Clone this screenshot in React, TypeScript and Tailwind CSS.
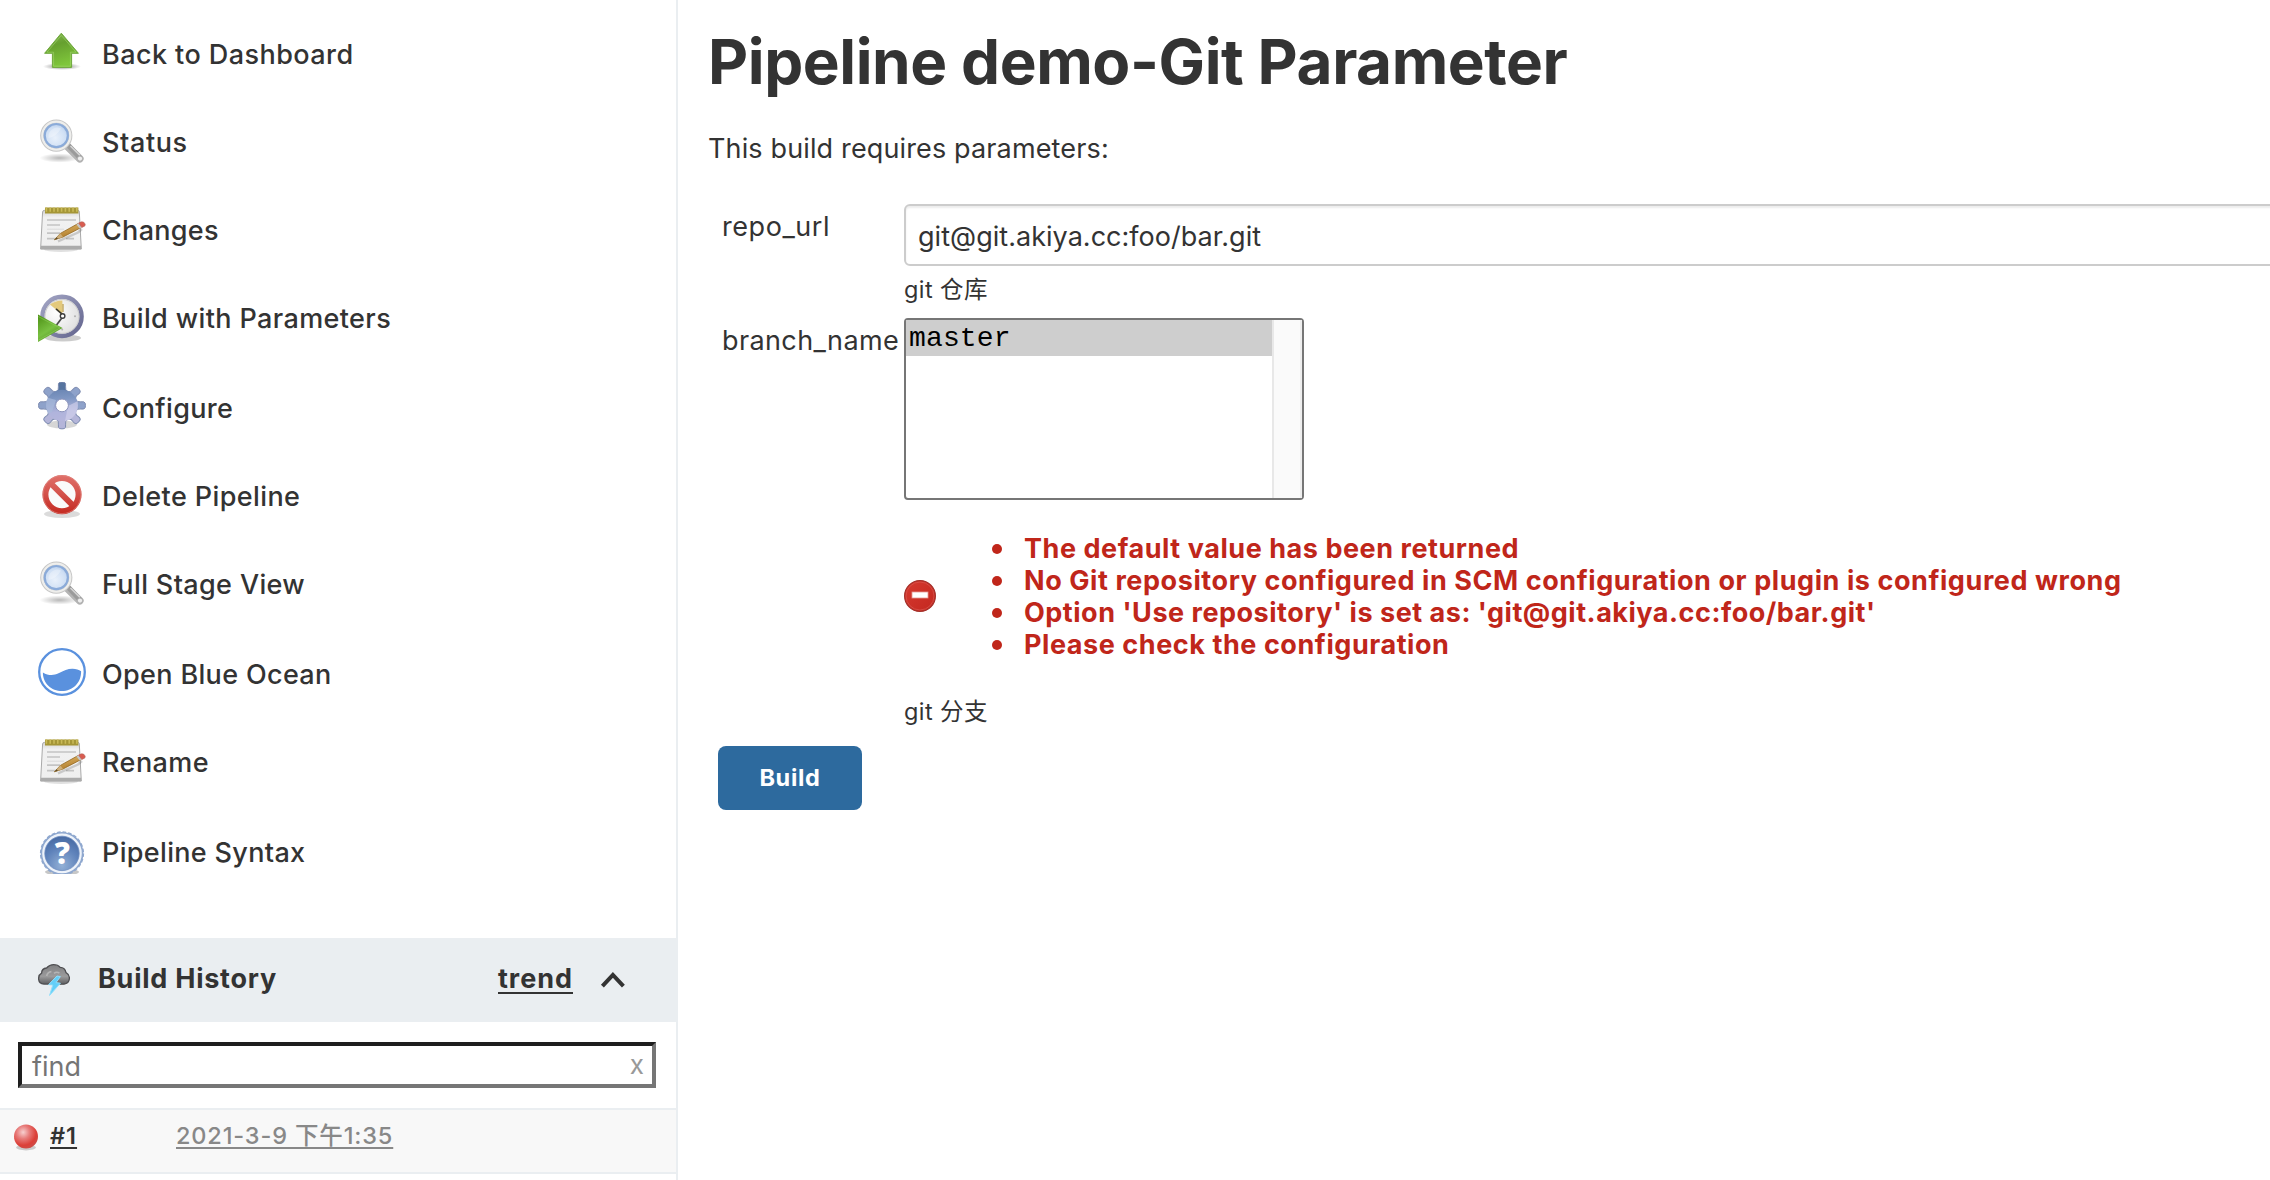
import React from "react";

const Svg48 = ({ children }: { children: React.ReactNode }) => (
  <svg width="48" height="48" viewBox="0 0 48 48" className="block shrink-0">
    {children}
  </svg>
);

function UpArrowIcon() {
  return (
    <Svg48>
      <defs>
        <linearGradient id="up-fill" x1="0" y1="0" x2="0.3" y2="1">
          <stop offset="0" stopColor="#86b956" />
          <stop offset="0.4" stopColor="#66a02f" />
          <stop offset="1" stopColor="#7fc63b" />
        </linearGradient>
        <radialGradient id="up-shadow">
          <stop offset="0" stopColor="#000" stopOpacity="0.5" />
          <stop offset="1" stopColor="#000" stopOpacity="0" />
        </radialGradient>
      </defs>
      <ellipse cx="24" cy="38.5" rx="19" ry="3.5" fill="url(#up-shadow)" />
      <path d="M23.3 5.2 L40.4 25.3 H33.6 V39.4 H14.4 V25.3 H6.6 Z" fill="url(#up-fill)" stroke="#6fa83d" strokeWidth="1" strokeLinejoin="round" />
      <path d="M23.3 7.4 L38 24.2 H32.4 V38.2 H15.6 V24.2 H9 Z" fill="none" stroke="#a5d873" strokeOpacity="0.55" strokeWidth="1" />
    </Svg48>
  );
}

function MagnifierIcon() {
  return (
    <Svg48>
      <defs>
        <radialGradient id="mag-glass" cx="0.45" cy="0.6" r="0.65">
          <stop offset="0" stopColor="#e9f1fb" />
          <stop offset="0.7" stopColor="#cfdff4" />
          <stop offset="1" stopColor="#b3cbea" />
        </radialGradient>
        <radialGradient id="mag-shadow">
          <stop offset="0" stopColor="#000" stopOpacity="0.28" />
          <stop offset="1" stopColor="#000" stopOpacity="0" />
        </radialGradient>
      </defs>
      <ellipse cx="21.5" cy="40" rx="20" ry="4.6" fill="url(#mag-shadow)" />
      <path d="M29 28 L41.8 40.8" stroke="#b4b4b4" strokeWidth="7.6" strokeLinecap="round" />
      <path d="M30 27 L41.5 39.4" stroke="#9b9b9b" strokeWidth="5" strokeLinecap="round" />
      <path d="M32.5 28 L42 37.4" stroke="#d4d4d4" strokeWidth="1.6" />
      <circle cx="42" cy="40.6" r="2.6" fill="#eeeeee" stroke="#a7a7a7" strokeWidth="0.9" />
      <circle cx="18.3" cy="17.6" r="14.2" fill="none" stroke="#c6c6c6" strokeWidth="3.8" />
      <circle cx="18.3" cy="17.6" r="14" fill="none" stroke="#eeeeec" strokeWidth="2.2" />
      <circle cx="18.3" cy="17.6" r="11.6" fill="url(#mag-glass)" stroke="#8babd9" strokeWidth="2.2" />
      <path d="M10.6 20 A 9 9 0 0 1 23 10.4 Q 19 18 10.6 20" fill="#fff" fillOpacity="0.3" />
    </Svg48>
  );
}

function NotepadIcon() {
  return (
    <Svg48>
      <defs>
        <linearGradient id="pad-fill" x1="0" y1="0" x2="0" y2="1">
          <stop offset="0" stopColor="#d2d2d2" />
          <stop offset="0.18" stopColor="#f1f1f1" />
          <stop offset="1" stopColor="#efefef" />
        </linearGradient>
        <linearGradient id="pad-pencil" x1="0" y1="0" x2="0.4" y2="1">
          <stop offset="0" stopColor="#e8bf70" />
          <stop offset="1" stopColor="#a97524" />
        </linearGradient>
      </defs>
      <ellipse cx="23" cy="43.6" rx="17" ry="2.4" fill="#000" fillOpacity="0.12" />
      <path d="M6.2 4.4 H40.2 Q41.2 4.4 41.3 6 L43.3 43 H2.6 L4.6 6 Q4.8 4.4 6.2 4.4Z" fill="url(#pad-fill)" stroke="#a9a9a9" strokeWidth="1" />
      <path d="M3 39.8 H43.2 V43.2 H2.6Z" fill="#ababab" />
      <path d="M7 4.6 H40.4" stroke="#a59637" strokeWidth="6" />
      <path d="M7.6 3.6 H40" stroke="#c9ba58" strokeWidth="4.2" strokeDasharray="1.6 2.2" />
      <path d="M9 14 H38 M9 19 H22 M9 27.2 H22 M9 32.6 H19 M28 32.6 H36" stroke="#c4c4c4" strokeWidth="1.7" />
      <path d="M9 23.2 H26" stroke="#dadada" strokeWidth="1" />
      <path d="M20 35.4 L40 26.5 L44 23" stroke="#000" strokeOpacity="0.16" strokeWidth="2.4" fill="none" />
      <path d="M16.4 33.8 L22.4 27.4 L40 17.6 L43 21.6 L25 31 Z" fill="url(#pad-pencil)" stroke="#93671f" strokeWidth="0.8" strokeLinejoin="round" />
      <path d="M16.4 33.8 L22.4 27.4 L25 31 Z" fill="#cdae7b" />
      <path d="M16.4 33.8 L18.6 31.2 L20 32.8 Z" fill="#5d4a25" />
      <path d="M38.4 18.4 L40.6 17 L43.8 21.4 L41.6 22.5Z" fill="#c5c5c5" />
      <path d="M40.6 17 Q44 15 46 16.4 Q48 18.2 46.8 20 L43.8 21.4Z" fill="#d95c50" stroke="#b7665b" strokeWidth="0.7" />
    </Svg48>
  );
}

function ClockPlayIcon() {
  return (
    <Svg48>
      <defs>
        <linearGradient id="clk-ring" x1="0" y1="0" x2="1" y2="1">
          <stop offset="0" stopColor="#a3a5c4" />
          <stop offset="1" stopColor="#63658e" />
        </linearGradient>
        <radialGradient id="clk-face" cx="0.35" cy="0.4" r="0.75">
          <stop offset="0" stopColor="#ffffff" />
          <stop offset="1" stopColor="#d9d9d9" />
        </radialGradient>
        <linearGradient id="clk-play" x1="0" y1="0" x2="0.6" y2="1">
          <stop offset="0" stopColor="#4c8f14" />
          <stop offset="0.6" stopColor="#79c142" />
          <stop offset="1" stopColor="#4f8c1f" />
        </linearGradient>
      </defs>
      <ellipse cx="25" cy="44" rx="18" ry="3.4" fill="#000" fillOpacity="0.2" />
      <circle cx="24" cy="22.4" r="19.6" fill="url(#clk-face)" stroke="url(#clk-ring)" strokeWidth="4.4" />
      <circle cx="24" cy="22.4" r="17" fill="none" stroke="#c9c9c9" strokeWidth="0.9" />
      <path d="M24.4 21 L12 10.6 Q16.4 6.6 24.4 6.4Z" fill="#e3c97c" />
      <path d="M24.4 20.4 L18 14.8" stroke="#3a382f" strokeWidth="1.6" />
      <path d="M25 10 V18" stroke="#b99a45" strokeWidth="1.2" />
      <path d="M25 22.6 L17 33" stroke="#4a4a4a" strokeWidth="1.7" />
      <circle cx="24.6" cy="22" r="2.3" fill="#fff" stroke="#3e3e3e" strokeWidth="1.4" />
      <circle cx="37" cy="22.2" r="1" fill="#b0b0b0" />
      <circle cx="24.2" cy="35.6" r="1" fill="#b0b0b0" />
      <path d="M0 20.6 L24.6 34 L0 48Z" fill="url(#clk-play)" />
      <path d="M0 22.4 L22 34 L0 46.4" fill="none" stroke="#9ad668" strokeOpacity="0.45" strokeWidth="1" />
    </Svg48>
  );
}

const TEETH = [0, 45, 90, 135, 180, 225, 270, 315];

function GearIcon() {
  return (
    <Svg48>
      <defs>
        <linearGradient id="gear-fill" gradientUnits="userSpaceOnUse" x1="22" y1="0" x2="26" y2="48">
          <stop offset="0" stopColor="#5b79a8" />
          <stop offset="0.35" stopColor="#7f97c3" />
          <stop offset="0.62" stopColor="#b0b4dc" />
          <stop offset="1" stopColor="#b9b7dc" />
        </linearGradient>
        <clipPath id="gear-body">
          <circle cx="24" cy="23.4" r="16" />
        </clipPath>
      </defs>
      <ellipse cx="24" cy="42.5" rx="15" ry="4" fill="#000" fillOpacity="0.16" />
      {TEETH.map((a) => (
        <path key={a} transform={`rotate(${a} 24 23.4)`} d="M18 9.8 Q21.2 7.8 20.4 4.6 Q19.8 0.6 21.8 0.2 Q24 -0.3 26.2 0.2 Q28.2 0.6 27.6 4.6 Q26.8 7.8 30 9.8Z" fill={a === 0 ? "#56749f" : a > 90 && a < 270 ? "#b4b5d9" : "#8ea2ca"} stroke="#7d8bb0" strokeWidth="1" />
      ))}
      <circle cx="24" cy="23.4" r="15.6" fill="url(#gear-fill)" />
      <g clipPath="url(#gear-body)">
        <path d="M4 14 L18 18 L14 30 L4 34Z" fill="#a9bbdc" fillOpacity="0.7" />
        <path d="M30 24 L42 18 L40 34 L26 44Z" fill="#d6d3ec" fillOpacity="0.6" />
      </g>
      <circle cx="24" cy="23.4" r="6.4" fill="#fff" stroke="#8c93bb" strokeWidth="1" />
    </Svg48>
  );
}

function DeleteIcon() {
  return (
    <Svg48>
      <defs>
        <linearGradient id="del-fill" gradientUnits="userSpaceOnUse" x1="0" y1="2" x2="0" y2="43">
          <stop offset="0" stopColor="#e0726c" />
          <stop offset="0.45" stopColor="#d5544d" />
          <stop offset="1" stopColor="#c3271e" />
        </linearGradient>
      </defs>
      <ellipse cx="24" cy="42" rx="18" ry="4" fill="#000" fillOpacity="0.14" />
      <circle cx="24" cy="22.6" r="16.6" fill="#fafafa" stroke="url(#del-fill)" strokeWidth="6" />
      <path d="M12.4 11 L35.6 34.2" stroke="url(#del-fill)" strokeWidth="6" />
      <circle cx="24" cy="22.6" r="19" fill="none" stroke="#e08a84" strokeOpacity="0.7" strokeWidth="0.9" />
    </Svg48>
  );
}

function OceanIcon() {
  return (
    <Svg48>
      <circle cx="24" cy="24" r="22.8" fill="#fff" stroke="#5a91de" strokeWidth="2.3" />
      <path d="M4.9 24.4 C10 27.6 15.5 27.8 20.5 25.3 C26 22.4 30 20.6 34.6 20.7 C38 20.8 41 22 43.1 23.2 C43.5 34.6 34.6 43 24 43 C13.4 43 4.6 34.8 4.9 24.4Z" fill="#5a91de" />
    </Svg48>
  );
}

function HelpIcon() {
  return (
    <Svg48>
      <defs>
        <radialGradient id="help-fill" cx="0.5" cy="0.85" r="0.9">
          <stop offset="0" stopColor="#93b0d6" />
          <stop offset="0.55" stopColor="#5f83bb" />
          <stop offset="1" stopColor="#43669f" />
        </radialGradient>
      </defs>
      <ellipse cx="24" cy="46" rx="17" ry="3.6" fill="#000" fillOpacity="0.22" />
      <circle cx="24" cy="27.4" r="20.6" fill="#eef3fa" stroke="#8fa8cf" strokeWidth="1.6" />
      <circle cx="24" cy="27.4" r="21.4" fill="none" stroke="#8fa8cf" strokeWidth="1.4" strokeDasharray="3.6 2" />
      <circle cx="24" cy="27.4" r="17.2" fill="url(#help-fill)" stroke="#6c8cbf" strokeWidth="0.8" />
      <text x="24.4" y="38" textAnchor="middle" fill="#fff" className="font-['Open_Sans',sans-serif] text-[30px] font-extrabold">
        ?
      </text>
    </Svg48>
  );
}

function StormIcon() {
  return (
    <svg width="32" height="32" viewBox="0 0 32 32" className="block shrink-0">
      <defs>
        <linearGradient id="storm-cloud" x1="0" y1="0" x2="0" y2="1">
          <stop offset="0" stopColor="#808082" />
          <stop offset="0.6" stopColor="#9b9b9c" />
          <stop offset="1" stopColor="#5e5e60" />
        </linearGradient>
      </defs>
      <path d="M6 20 Q0.6 19.4 0.6 14.4 Q0.8 10.6 3.6 9.2 Q3.6 4.6 8.6 4 Q11.4 0.7 15.6 0.7 Q20 0.7 22.2 3.4 Q27 3.6 28 8.6 Q31.6 10.6 31.4 14.6 Q31 19.4 26 20.2 Z" fill="url(#storm-cloud)" stroke="#4f4f52" strokeWidth="1.3" />
      <path d="M8.6 12 Q9.6 8 13.4 7.6 M16 9.4 Q18.4 7.4 21.4 9" stroke="#b4b4b4" strokeWidth="1.6" fill="none" />
      <path d="M19 12 L10.6 20.6 L14.8 21 L11.6 31.4 L22.4 19.2 L18 18.6 L22.4 12.6Z" fill="#63cff8" stroke="#8fdefb" strokeWidth="1" />
    </svg>
  );
}

function BallIcon() {
  return (
    <svg width="26" height="28" viewBox="0 0 26 28" className="block shrink-0">
      <defs>
        <radialGradient id="ball-fill" cx="0.38" cy="0.32" r="0.68">
          <stop offset="0" stopColor="#f7cfcf" />
          <stop offset="0.4" stopColor="#e77b7a" />
          <stop offset="0.8" stopColor="#dc3f38" />
          <stop offset="1" stopColor="#cf4a45" />
        </radialGradient>
      </defs>
      <ellipse cx="13" cy="24.6" rx="10" ry="2.8" fill="#000" fillOpacity="0.18" />
      <circle cx="13" cy="13.6" r="12" fill="url(#ball-fill)" />
    </svg>
  );
}

function ErrorIcon() {
  return (
    <svg width="32" height="32" viewBox="0 0 32 32" className="block shrink-0">
      <defs>
        <linearGradient id="err-fill" x1="0" y1="0" x2="1" y2="1">
          <stop offset="0" stopColor="#d63a30" />
          <stop offset="1" stopColor="#c3271f" />
        </linearGradient>
      </defs>
      <circle cx="16" cy="16" r="15.4" fill="url(#err-fill)" stroke="#a3302a" strokeWidth="1.2" />
      <circle cx="16" cy="16" r="14" fill="none" stroke="#d9564e" strokeOpacity="0.7" strokeWidth="1" />
      <rect x="8" y="12" width="16" height="6" fill="#fff" stroke="#e79a95" strokeWidth="0.8" />
    </svg>
  );
}

const NAV = [
  { label: "Back to Dashboard", icon: <UpArrowIcon />, row: "h-[90px]", text: "mt-[11px] tracking-[0.43px]" },
  { label: "Status", icon: <MagnifierIcon />, row: "h-[88px]", text: "mt-[9px] tracking-[0.6px]" },
  { label: "Changes", icon: <NotepadIcon />, row: "h-[88px]", text: "mt-[9px] tracking-[0.3px]" },
  { label: "Build with Parameters", icon: <ClockPlayIcon />, row: "h-[88px]", text: "mt-[9px] tracking-[0.38px]" },
  { label: "Configure", icon: <GearIcon />, row: "h-[90px]", text: "mt-[11px] tracking-[0.33px]" },
  { label: "Delete Pipeline", icon: <DeleteIcon />, row: "h-[88px]", text: "mt-[9px] tracking-[0.4px]" },
  { label: "Full Stage View", icon: <MagnifierIcon />, row: "h-[88px]", text: "mt-[9px] tracking-[0.36px]" },
  { label: "Open Blue Ocean", icon: <OceanIcon />, row: "h-[90px]", text: "mt-[11px] tracking-[0.34px]" },
  { label: "Rename", icon: <NotepadIcon />, row: "h-[88px]", text: "mt-[9px] tracking-[0.45px]" },
  { label: "Pipeline Syntax", icon: <HelpIcon />, row: "h-[112px]", text: "mt-[11px] tracking-[0.33px]" },
];

const ERRORS = [
  { text: "The default value has been returned", tracking: "tracking-[0.55px]" },
  { text: "No Git repository configured in SCM configuration or plugin is configured wrong", tracking: "tracking-[0.575px]" },
  { text: "Option 'Use repository' is set as: 'git@git.akiya.cc:foo/bar.git'", tracking: "tracking-[0.52px]" },
  { text: "Please check the configuration", tracking: "tracking-[0.56px]" },
];

function Sidebar() {
  return (
    <aside className="flex h-full w-[678px] shrink-0 flex-col border-r-2 border-[#eaeef1]">
      <nav className="flex flex-col pt-[28px]">
        {NAV.map((item) => (
          <a key={item.label} className={`flex items-start pl-[38px] ${item.row}`}>
            {item.icon}
            <span className={`ml-[16px] text-[27px] leading-[32px] font-medium whitespace-nowrap ${item.text}`}>{item.label}</span>
          </a>
        ))}
      </nav>

      <div className="-mr-[2px] flex h-[84px] items-start bg-[#eaeef1] pt-[25px] pl-[38px]">
        <div className="mt-[1px]">
          <StormIcon />
        </div>
        <span className="ml-[28px] text-[27px] leading-[32px] font-bold tracking-[0.75px] whitespace-nowrap">Build History</span>
        <div className="mr-[51px] ml-auto flex">
          <a className="text-[27px] leading-[32px] font-bold tracking-[0.97px] underline decoration-2 underline-offset-[4px]">trend</a>
          <svg width="28" height="20" viewBox="0 0 28 20" className="mt-[7px] ml-[26px] block">
            <path d="M3.4 16.2 L13.9 5 L24.4 16.2" fill="none" stroke="#333" strokeWidth="4" strokeLinejoin="miter" />
          </svg>
        </div>
      </div>

      <div className="px-[18px] py-[20px]">
        <div className="flex h-[46px] w-[638px] items-start justify-between border-4 border-t-[#1e1e1e] border-r-[#767676] border-b-[#767676] border-l-[#1e1e1e] pr-[8px] pl-[10px]">
          <span className="mt-[5px] text-[27px] leading-[32px] text-[#757575]">find</span>
          <span className="mt-[3px] text-[26px] leading-[32px] text-[#999]">x</span>
        </div>
      </div>

      <div className="flex h-[66px] items-start border-y-2 border-[#eaeef1] bg-[#f8f8f8] pl-[13px]">
        <div className="mt-[13px]">
          <BallIcon />
        </div>
        <a className="mt-[12px] ml-[11px] w-[126px] text-[23.5px] leading-[28px] font-semibold">
          <span className="tracking-[1px] underline decoration-2 underline-offset-[3px]">#1</span>
        </a>
        <a className="mt-[12px] text-[23.5px] leading-[28px] font-medium tracking-[0.86px] whitespace-nowrap text-[#888] underline decoration-2 underline-offset-[3px]">
          2021-3-9 下午1:35
        </a>
      </div>
    </aside>
  );
}

function Main() {
  return (
    <main className="flex min-w-0 flex-1 flex-col pl-[30px]">
      <h1 className="mt-[26px] text-[62px] leading-[72px] font-bold tracking-[-0.42px] whitespace-nowrap">Pipeline demo-Git Parameter</h1>
      <p className="mt-[35px] text-[27px] leading-[32px] tracking-[0.14px]">This build requires parameters:</p>

      <div className="mt-[39px] flex items-start">
        <label className="mt-[7px] w-[196px] shrink-0 pl-[14px] text-[27px] leading-[32px] tracking-[0.55px]">repo_url</label>
        <div className="-mr-[20px] min-w-0 flex-1">
          <div className="h-[62px] rounded-[6px] border-2 border-[#ccc] px-[12px] pt-[15px] text-[27px] leading-[32px] tracking-[0.03px] shadow-[inset_0_2px_2px_rgba(0,0,0,0.075)]">
            git@git.akiya.cc:foo/bar.git
          </div>
          <div className="mt-[10px] h-[28px] text-[23.5px] leading-[28px] tracking-[0.4px]">git 仓库</div>
        </div>
      </div>

      <div className="mt-[14px] flex items-start">
        <label className="mt-[7px] w-[196px] shrink-0 pl-[14px] text-[27px] leading-[32px] tracking-[0.38px]">branch_name</label>
        <div className="flex flex-col">
          <div className="flex h-[182px] w-[400px] rounded-[4px] border-2 border-[#767676]">
            <div className="flex-1">
              <div className="h-[36px] bg-[#cecece] pl-[3px] font-['Liberation_Mono',monospace] text-[28px] leading-[38px] tracking-[0.15px] text-black">master</div>
            </div>
            <div className="w-[30px] border-r-2 border-l-2 border-r-[#eeeeee] border-l-[#e8e8e8] bg-[#fafafa]" />
          </div>
          <div className="mt-[33px] flex items-center text-[#c0261a]">
            <div className="-mt-[2px]">
              <ErrorIcon />
            </div>
            <ul className="flex flex-col pl-[56px]">
              {ERRORS.map((e) => (
                <li key={e.text} className="flex h-[32px] items-center">
                  <span className="size-[10px] rounded-full bg-[#c0261a]" />
                  <span className={`ml-[22px] text-[27px] leading-[32px] font-bold whitespace-nowrap ${e.tracking}`}>{e.text}</span>
                </li>
              ))}
            </ul>
          </div>
          <div className="mt-[37px] text-[23.5px] leading-[28px] tracking-[0.4px]">git 分支</div>
        </div>
      </div>

      <button className="mt-[20px] ml-[10px] h-[64px] w-[144px] rounded-[8px] bg-[#2d6a9e] text-center text-[23.5px] leading-[28px] font-bold tracking-[0.7px] text-white">
        Build
      </button>
    </main>
  );
}

export default function App() {
  return (
    <div className="flex h-[1180px] w-[2270px] overflow-hidden bg-white font-['Inter','Noto_Sans_CJK_SC',sans-serif] text-[#333]">
      <Sidebar />
      <Main />
    </div>
  );
}
